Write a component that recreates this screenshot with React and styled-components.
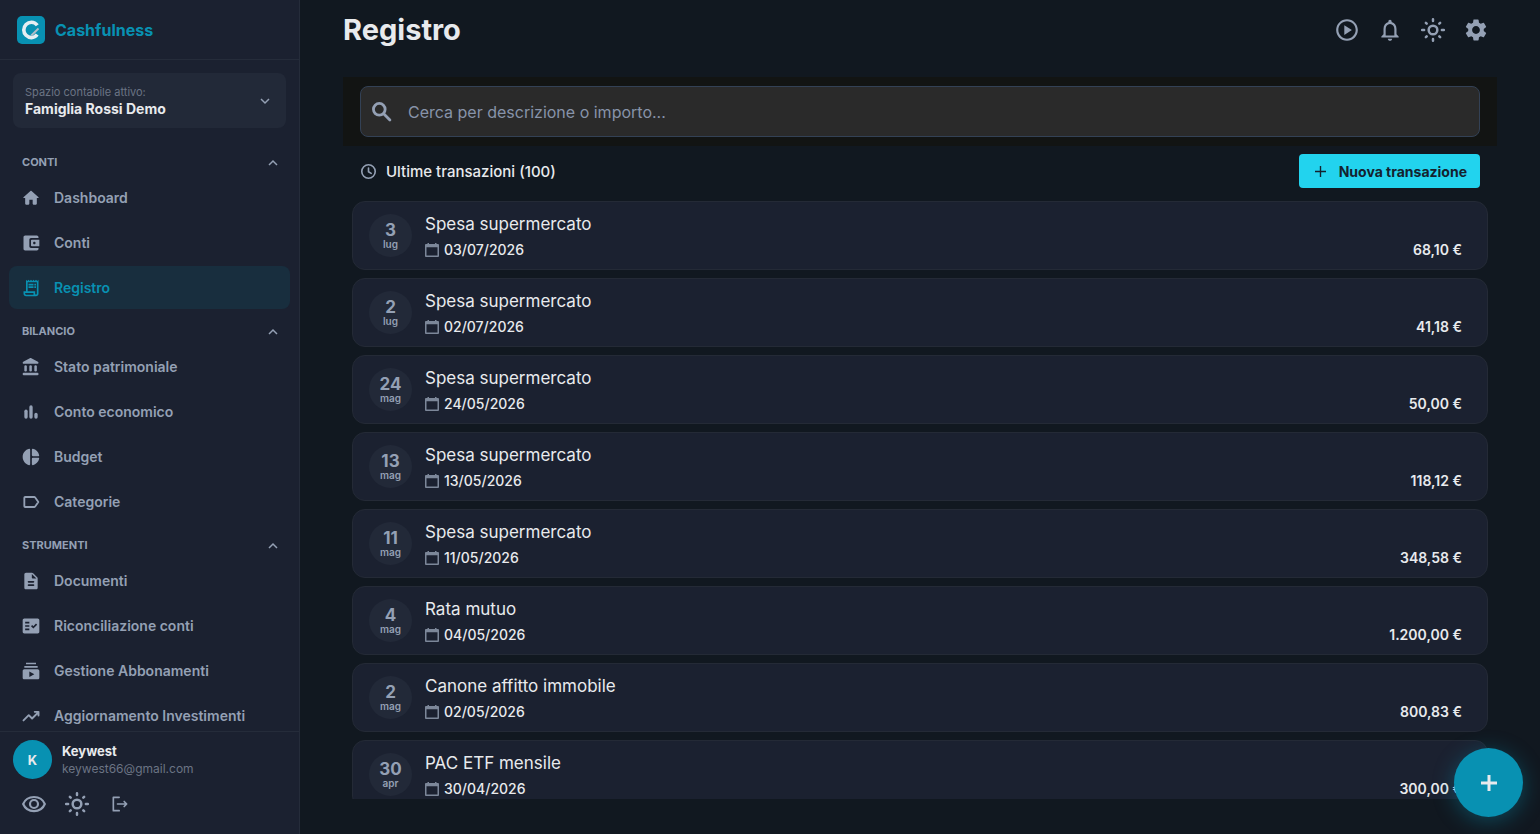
import React from "react"
import styled, { createGlobalStyle } from "styled-components"
import {
  MdFactCheck,
  MdOutlineNotifications,
  MdOutlinePlayCircle,
  MdOutlineReceiptLong,
  MdSettings,
  MdSubscriptions,
} from "react-icons/md"

const colors = {
  page: "#111820",
  panel: "#1b2130",
  raised: "#222938",
  line: "#252c3a",
  primary: "#0891b2",
  accent: "#22d3ee",
  text: "#e8eaed",
  muted: "#94a0b4",
  faint: "#6b7484",
}

const GlobalStyle = createGlobalStyle`
  *, *::before, *::after {
    box-sizing: border-box;
  }
  body {
    margin: 0;
    background: ${colors.page};
    color: ${colors.text};
    font-family: Inter, "Liberation Sans", sans-serif;
  }
  button, input {
    font-family: inherit;
  }
  button {
    border: 0;
    padding: 0;
    background: transparent;
    color: inherit;
    cursor: pointer;
  }
`

const Layout = styled.div`
  display: flex;
  height: 100vh;
  overflow: hidden;
`

const Sidebar = styled.aside`
  flex: 0 0 300px;
  display: flex;
  flex-direction: column;
  background: ${colors.panel};
  border-right: 1px solid ${colors.line};
`

const Brand = styled.a`
  display: flex;
  align-items: center;
  gap: 10px;
  height: 60px;
  flex-shrink: 0;
  padding: 0 17px;
  border-bottom: 1px solid ${colors.line};
  color: ${colors.primary};
  font-size: 16px;
  font-weight: 700;
  text-decoration: none;
`

const SpaceButton = styled.button`
  display: flex;
  align-items: center;
  justify-content: space-between;
  flex-shrink: 0;
  margin: 13px 13px 0 13px;
  height: 55px;
  padding: 0 16px 0 12px;
  border-radius: 8px;
  background: ${colors.raised};
  color: ${colors.muted};
  text-align: left;
`

const SpaceLabel = styled.span`
  display: block;
  font-size: 11px;
  line-height: 16px;
  color: ${colors.faint};
`

const SpaceName = styled.span`
  display: block;
  font-size: 14px;
  line-height: 18px;
  font-weight: 700;
  color: ${colors.text};
`

const Nav = styled.nav`
  flex: 1;
  min-height: 0;
  margin-top: 13px;
  padding: 0 9px;
  overflow: hidden;
`

const SectionButton = styled.button`
  display: flex;
  align-items: center;
  justify-content: space-between;
  width: 100%;
  padding: 13px 12px 4px 13px;
  font-size: 11px;
  line-height: 17px;
  font-weight: 700;
  color: ${colors.muted};
`

const NavList = styled.ul`
  display: flex;
  flex-direction: column;
  gap: 2px;
  margin: 0;
  padding: 1px 0;
  list-style: none;
`

const NavLink = styled.a`
  display: flex;
  align-items: center;
  gap: 13px;
  height: 43px;
  padding: 0 12px;
  border-radius: 8px;
  background: ${({ $active }) => ($active ? "#182e3e" : "transparent")};
  color: ${({ $active }) => ($active ? colors.primary : colors.muted)};
  font-size: 14px;
  font-weight: 600;
  text-decoration: none;
  white-space: nowrap;
`

const NavIcon = styled.span`
  display: flex;
  flex: 0 0 20px;
`

const SidebarFooter = styled.div`
  flex-shrink: 0;
  height: 103px;
  padding: 8px 13px 0;
  border-top: 1px solid ${colors.line};
`

const UserRow = styled.div`
  display: flex;
  align-items: center;
  gap: 10px;
`

const Avatar = styled.div`
  width: 39px;
  height: 39px;
  display: grid;
  place-items: center;
  border-radius: 50%;
  background: ${colors.primary};
  font-size: 13px;
  font-weight: 700;
`

const UserName = styled.div`
  font-size: 13px;
  line-height: 18px;
  font-weight: 700;
`

const UserMail = styled.div`
  font-size: 12px;
  line-height: 18px;
  color: ${colors.faint};
`

const FooterActions = styled.div`
  display: flex;
  align-items: center;
  gap: 17px;
  padding: 12px 8px 0;
`

const IconButton = styled.button`
  display: grid;
  place-items: center;
  width: 26px;
  height: 26px;
  color: ${colors.muted};
`

const Main = styled.main`
  flex: 1;
  min-width: 0;
  display: flex;
  flex-direction: column;
  padding: 0 43px 35px;
`

const TopBar = styled.header`
  display: flex;
  align-items: center;
  justify-content: space-between;
  flex-shrink: 0;
  height: 60px;
  padding-right: 8px;
`

const Title = styled.h1`
  margin: 0;
  font-size: 29px;
  line-height: 36px;
  font-weight: 700;
`

const TopActions = styled.div`
  display: flex;
  gap: 17px;
`

const SearchStrip = styled.div`
  flex-shrink: 0;
  margin-top: 17px;
  padding: 9px 17px;
  background: #121413;
`

const SearchBox = styled.label`
  display: flex;
  align-items: center;
  gap: 13px;
  height: 51px;
  padding: 0 8px;
  border: 1px solid #334155;
  border-radius: 8px;
  background: #2a2a2a;
  color: ${colors.muted};
`

const SearchInput = styled.input`
  flex: 1;
  min-width: 0;
  border: 0;
  padding: 0;
  outline: none;
  background: transparent;
  color: ${colors.text};
  font-size: 16px;
  &::placeholder {
    color: #8793a9;
    opacity: 1;
  }
`

const ListHeader = styled.div`
  display: flex;
  align-items: center;
  justify-content: space-between;
  flex-shrink: 0;
  height: 34px;
  margin: 8px 17px 0;
`

const ListTitle = styled.h2`
  display: flex;
  align-items: center;
  gap: 9px;
  margin: 0;
  font-size: 15px;
  font-weight: 500;
  svg {
    color: ${colors.muted};
  }
`

const NewButton = styled.button`
  display: flex;
  align-items: center;
  gap: 13px;
  height: 34px;
  padding: 0 13px 0 16px;
  border-radius: 4px;
  background: ${colors.accent};
  color: #14222f;
  font-size: 14px;
  font-weight: 700;
`

const List = styled.ul`
  flex: 1;
  min-height: 0;
  display: flex;
  flex-direction: column;
  gap: 8px;
  margin: 13px 9px 0;
  padding: 0;
  overflow: hidden;
  list-style: none;
`

const Card = styled.li`
  display: flex;
  align-items: center;
  gap: 13px;
  flex: 0 0 69px;
  padding: 0 25px 0 16px;
  border: 1px solid #242a36;
  border-radius: 13px;
  background: ${colors.panel};
`

const DayBadge = styled.div`
  display: flex;
  flex-direction: column;
  align-items: center;
  justify-content: center;
  width: 43px;
  height: 43px;
  border-radius: 50%;
  background: ${colors.raised};
  color: ${colors.muted};
`

const Day = styled.span`
  font-size: 17px;
  line-height: 17px;
  font-weight: 700;
`

const Month = styled.span`
  font-size: 10px;
  line-height: 10px;
  font-weight: 600;
`

const CardBody = styled.div`
  flex: 1;
  min-width: 0;
  padding-top: 2px;
`

const CardTitle = styled.div`
  font-size: 17px;
  line-height: 26px;
`

const CardMeta = styled.div`
  display: flex;
  align-items: center;
  gap: 5px;
  line-height: 26px;
  font-size: 14px;
  font-weight: 500;
  svg {
    color: #7c8799;
  }
`

const Amount = styled.span`
  margin-left: auto;
  font-weight: 600;
`

const Fab = styled.button`
  position: fixed;
  right: 17px;
  bottom: 17px;
  width: 69px;
  height: 69px;
  display: grid;
  place-items: center;
  border-radius: 50%;
  background: ${colors.primary};
  box-shadow: 0 4px 21px rgba(8, 145, 178, 0.4);
`

const Icon = ({ size = 20, children }) => (
  <svg width={size} height={size} viewBox="0 0 24 24" fill="currentColor" aria-hidden="true">
    {children}
  </svg>
)

const LineIcon = ({ size = 20, weight = 2, children }) => (
  <svg
    width={size}
    height={size}
    viewBox="0 0 24 24"
    fill="none"
    stroke="currentColor"
    strokeWidth={weight}
    strokeLinecap="round"
    strokeLinejoin="round"
    aria-hidden="true"
  >
    {children}
  </svg>
)

const HomeIcon = () => (
  <Icon>
    <path d="M10 19v-5h4v5c0 .55.45 1 1 1h3c.55 0 1-.45 1-1v-7h1.7c.46 0 .68-.57.33-.87L12.67 3.6c-.38-.34-.96-.34-1.34 0l-8.36 7.53c-.34.3-.13.87.33.87H5v7c0 .55.45 1 1 1h3c.55 0 1-.45 1-1z" />
  </Icon>
)

const WalletIcon = () => (
  <Icon>
    <path d="M10 16V8c0-1.1.89-2 2-2h9V5c0-1.1-.9-2-2-2H5c-1.11 0-2 .9-2 2v14c0 1.1.89 2 2 2h14c1.1 0 2-.9 2-2v-1h-9c-1.11 0-2-.9-2-2zm3-8c-.55 0-1 .45-1 1v6c0 .55.45 1 1 1h9V8h-9zm3 5.5c-.83 0-1.5-.67-1.5-1.5s.67-1.5 1.5-1.5 1.5.67 1.5 1.5-.67 1.5-1.5 1.5z" />
  </Icon>
)

const BankIcon = () => (
  <Icon>
    <rect x="4" y="10" width="3" height="7.500" rx="1.500" />
    <rect x="10" y="10" width="3" height="7.500" rx="1.500" />
    <rect x="16" y="10" width="3" height="7.500" rx="1.500" />
    <rect x="2" y="19" width="19" height="3" rx="1.300" />
    <path d="M10.570 1.490l-7.900 4.160c-.41.210-.67.640-.67 1.100C2 7.440 2.560 8 3.250 8h16.510C20.440 8 21 7.440 21 6.750c0-.46-.26-.89-.67-1.100l-7.900-4.160c-.58-.31-1.280-.31-1.860 0z" />
  </Icon>
)

const BarsIcon = () => (
  <Icon>
    <rect x="4" y="9" width="4" height="11" rx="2" />
    <rect x="10" y="4" width="4" height="16" rx="2" />
    <rect x="16" y="13" width="4" height="7" rx="2" />
  </Icon>
)

const PieIcon = () => (
  <Icon>
    <path d="M11 3.18v17.64c0 .64-.59 1.12-1.21.98C5.32 20.8 2 16.79 2 12s3.32-8.8 7.79-9.8c.62-.14 1.21.34 1.21.98zm2.03 0v6.81c0 .55.45 1 1 1h6.79c.64 0 1.12-.59.98-1.22-.85-3.76-3.8-6.72-7.55-7.57-.63-.14-1.22.34-1.22.98zm0 10.83v6.81c0 .64.59 1.12 1.22.98 3.76-.85 6.71-3.82 7.56-7.58.14-.62-.35-1.22-.98-1.22h-6.79c-.56.01-1.01.46-1.01 1.01z" />
  </Icon>
)

const LabelIcon = () => (
  <LineIcon weight={2.2}>
    <path d="M5 6h11c.3 0 .6.200.8.400L20.800 12l-4 5.600c-.2.200-.5.400-.8.400H5c-.55 0-1-.45-1-1V7c0-.55.450-1 1-1z" />
  </LineIcon>
)

const DocIcon = () => (
  <Icon>
    <path d="M14.59 2.59c-.38-.38-.89-.59-1.42-.59H6c-1.1 0-2 .9-2 2v16c0 1.1.89 2 1.99 2H18c1.1 0 2-.9 2-2V8.83c0-.53-.21-1.04-.59-1.41l-4.82-4.83zM15 18H9c-.55 0-1-.45-1-1s.45-1 1-1h6c.55 0 1 .45 1 1s-.45 1-1 1zm0-4H9c-.55 0-1-.45-1-1s.45-1 1-1h6c.55 0 1 .45 1 1s-.45 1-1 1zm-2-6V3.5L18.5 9H14c-.55 0-1-.45-1-1z" />
  </Icon>
)

const TrendIcon = () => (
  <LineIcon weight={2.3}>
    <path d="M3 17.300l6.300-6.300 4 4L21 7.300M16.500 7H21v4.500" />
  </LineIcon>
)

const SearchIcon = () => (
  <LineIcon size={26} weight={2.6}>
    <circle cx="9.500" cy="9.500" r="5.400" />
    <path d="M14 14l5.300 5.300" />
  </LineIcon>
)

const EyeIcon = () => (
  <LineIcon size={26}>
    <path d="M2 12C3.700 7.900 7.600 5.500 12 5.500s8.300 2.400 10 6.500c-1.700 4.100-5.600 6.500-10 6.500S3.700 16.100 2 12z" />
    <circle cx="12" cy="12" r="3.700" />
  </LineIcon>
)

const SunIcon = () => (
  <LineIcon size={26} weight={2.3}>
    <circle cx="12" cy="12" r="4" />
    <path d="M12 2v1.800M12 20.200V22M2 12h1.800M20.200 12H22M5.400 5.400l.8.800M17.800 17.800l.8.800M5.400 18.600l.8-.8M17.800 6.200l.8-.8" />
  </LineIcon>
)

const LogoutIcon = () => (
  <LineIcon>
    <path d="M11 4H4v16h7M9 12h11M17 9l3 3-3 3" />
  </LineIcon>
)

const ClockIcon = () => (
  <LineIcon size={17} weight={2.3}>
    <circle cx="12" cy="12" r="9.500" />
    <path d="M12 7v5.300l3.800 2.400" />
  </LineIcon>
)

const CalendarIcon = () => (
  <svg width="14" height="16" viewBox="0 0 14 16" fill="currentColor" aria-hidden="true">
    <path
      d="M2.500 1H4v1h6V1h1.500v1H13c.5 0 1 .5 1 1v11c0 .5-.5 1-1 1H1c-.5 0-1-.5-1-1V3c0-.5.5-1 1-1h1.500zM1.500 5.300v8.200h11V5.300z"
      fillRule="evenodd"
    />
  </svg>
)

const Chevron = ({ up }) => (
  <svg width="10" height="10" viewBox="0 0 10 10" fill="none" stroke="currentColor" strokeWidth="1.500" aria-hidden="true">
    <path d={up ? "M1 7l4-4 4 4" : "M1 3l4 4 4-4"} />
  </svg>
)

const Plus = ({ size, weight }) => (
  <svg width={size} height={size} viewBox="0 0 16 16" stroke="currentColor" strokeWidth={weight} aria-hidden="true">
    <path d="M8 0v16M0 8h16" />
  </svg>
)

const Logo = () => (
  <svg width="28" height="28" viewBox="0 0 28 28" fill="none" aria-hidden="true">
    <rect width="28" height="28" rx="5" fill={colors.primary} />
    <path d="M20.300 9.300C18.600 7 16.700 6.200 14.500 6.200a7.700 7.700 0 1 0 0 15.400c2.400 0 4.200-.9 5.600-3" stroke="#e6eef2" strokeWidth="3.600" />
    <path d="M14.300 19.500L21.500 12.500" stroke="#b4bec8" strokeWidth="1.800" />
  </svg>
)

const sections = [
  {
    name: "CONTI",
    items: [
      { label: "Dashboard", icon: <HomeIcon /> },
      { label: "Conti", icon: <WalletIcon /> },
      { label: "Registro", icon: <MdOutlineReceiptLong size={20} />, active: true },
    ],
  },
  {
    name: "BILANCIO",
    items: [
      { label: "Stato patrimoniale", icon: <BankIcon /> },
      { label: "Conto economico", icon: <BarsIcon /> },
      { label: "Budget", icon: <PieIcon /> },
      { label: "Categorie", icon: <LabelIcon /> },
    ],
  },
  {
    name: "STRUMENTI",
    items: [
      { label: "Documenti", icon: <DocIcon /> },
      { label: "Riconciliazione conti", icon: <MdFactCheck size={20} /> },
      { label: "Gestione Abbonamenti", icon: <MdSubscriptions size={20} /> },
      { label: "Aggiornamento Investimenti", icon: <TrendIcon /> },
    ],
  },
]

const transactions = [
  { day: "3", month: "lug", title: "Spesa supermercato", date: "03/07/2026", amount: "68,10 €" },
  { day: "2", month: "lug", title: "Spesa supermercato", date: "02/07/2026", amount: "41,18 €" },
  { day: "24", month: "mag", title: "Spesa supermercato", date: "24/05/2026", amount: "50,00 €" },
  { day: "13", month: "mag", title: "Spesa supermercato", date: "13/05/2026", amount: "118,12 €" },
  { day: "11", month: "mag", title: "Spesa supermercato", date: "11/05/2026", amount: "348,58 €" },
  { day: "4", month: "mag", title: "Rata mutuo", date: "04/05/2026", amount: "1.200,00 €" },
  { day: "2", month: "mag", title: "Canone affitto immobile", date: "02/05/2026", amount: "800,83 €" },
  { day: "30", month: "apr", title: "PAC ETF mensile", date: "30/04/2026", amount: "300,00 €" },
]

const App = () => (
  <>
    <GlobalStyle />
    <Layout>
      <Sidebar>
        <Brand href="#">
          <Logo />
          Cashfulness
        </Brand>
        <SpaceButton>
          <span>
            <SpaceLabel>Spazio contabile attivo:</SpaceLabel>
            <SpaceName>Famiglia Rossi Demo</SpaceName>
          </span>
          <Chevron />
        </SpaceButton>
        <Nav>
          {sections.map(({ name, items }) => (
            <div key={name}>
              <SectionButton>
                {name}
                <Chevron up />
              </SectionButton>
              <NavList>
                {items.map(({ label, icon, active }) => (
                  <li key={label}>
                    <NavLink href="#" $active={active}>
                      <NavIcon>{icon}</NavIcon>
                      {label}
                    </NavLink>
                  </li>
                ))}
              </NavList>
            </div>
          ))}
        </Nav>
        <SidebarFooter>
          <UserRow>
            <Avatar>K</Avatar>
            <div>
              <UserName>Keywest</UserName>
              <UserMail>keywest66@gmail.com</UserMail>
            </div>
          </UserRow>
          <FooterActions>
            <IconButton aria-label="Mostra importi">
              <EyeIcon />
            </IconButton>
            <IconButton aria-label="Tema">
              <SunIcon />
            </IconButton>
            <IconButton aria-label="Esci">
              <LogoutIcon />
            </IconButton>
          </FooterActions>
        </SidebarFooter>
      </Sidebar>
      <Main>
        <TopBar>
          <Title>Registro</Title>
          <TopActions>
            <IconButton aria-label="Tutorial">
              <MdOutlinePlayCircle size={26} />
            </IconButton>
            <IconButton aria-label="Notifiche">
              <MdOutlineNotifications size={26} />
            </IconButton>
            <IconButton aria-label="Tema">
              <SunIcon />
            </IconButton>
            <IconButton aria-label="Impostazioni">
              <MdSettings size={26} />
            </IconButton>
          </TopActions>
        </TopBar>
        <SearchStrip>
          <SearchBox>
            <SearchIcon />
            <SearchInput type="text" aria-label="Cerca" placeholder="Cerca per descrizione o importo..." />
          </SearchBox>
        </SearchStrip>
        <ListHeader>
          <ListTitle>
            <ClockIcon />
            Ultime transazioni (100)
          </ListTitle>
          <NewButton>
            <Plus size={11} weight={2} />
            Nuova transazione
          </NewButton>
        </ListHeader>
        <List>
          {transactions.map(({ day, month, title, date, amount }) => (
            <Card key={date}>
              <DayBadge>
                <Day>{day}</Day>
                <Month>{month}</Month>
              </DayBadge>
              <CardBody>
                <CardTitle>{title}</CardTitle>
                <CardMeta>
                  <CalendarIcon />
                  {date}
                  <Amount>{amount}</Amount>
                </CardMeta>
              </CardBody>
            </Card>
          ))}
        </List>
      </Main>
      <Fab aria-label="Aggiungi">
        <Plus size={16} weight={3} />
      </Fab>
    </Layout>
  </>
)

export default App
